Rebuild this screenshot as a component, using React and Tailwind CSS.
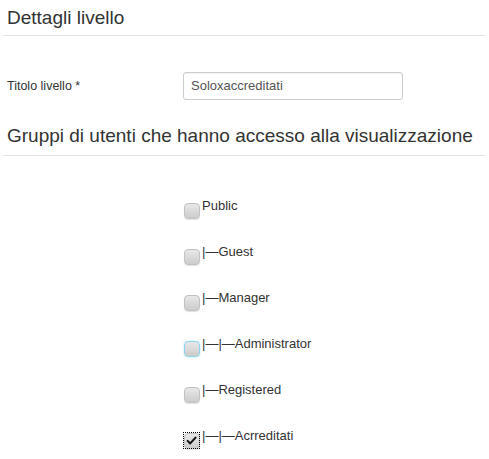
import React from "react";

const groups = [
  { label: "Public" },
  { label: "|—Guest" },
  { label: "|—Manager" },
  { label: "|—|—Administrator", focus: true },
  { label: "|—Registered" },
  { label: "|—|—Acrreditati", checked: true },
];

const Box = ({ checked, focus }) => (
  <span
    className={`mt-[5px] shrink-0 w-[17px] h-[17px] flex items-center justify-center ${
      checked ? "outline-1 outline-dotted outline-black -outline-offset-1" : ""
    }`}
  >
    <span
      className={`w-[16px] h-[16px] rounded-[4px] border bg-gradient-to-b from-[#e8e8e8] to-[#cccccc] flex items-center justify-center ${
        focus ? "border-[#8fd4ee] shadow-[0_0_2px_#a4def3]" : "border-[#c2c2c2] shadow-[0_1px_1px_rgba(0,0,0,0.12)]"
      }`}
    >
      {checked && (
        <svg viewBox="0 0 12 12" className="w-[11px] h-[11px]">
          <path d="M1.8 6.4 L4.6 9.2 L10.4 2.8" fill="none" stroke="#111" strokeWidth="2.2" strokeLinecap="round" strokeLinejoin="round" />
        </svg>
      )}
    </span>
  </span>
);

export default function App() {
  return (
    <div className="w-[489px] h-[459px] bg-white text-[#333] overflow-hidden" style={{ fontFamily: '"Liberation Sans", Arial, sans-serif' }}>
      <div className="mx-[3px] pt-[6px]">
        <h3 className="pl-[4px] text-[19px] leading-[24px] pb-[5px] border-b border-[#e5e5e5]">Dettagli livello</h3>
      </div>

      <div className="flex items-center mt-[36px] pl-[7px]">
        <label className="w-[176px] text-[12.5px]">Titolo livello *</label>
        <div className="w-[220px] h-[28px] border border-[#cccccc] rounded-[3px] flex items-center pl-[7px] text-[13px] text-[#555] shadow-[inset_0_1px_1px_rgba(0,0,0,0.05)]">
          Soloxaccreditati
        </div>
      </div>

      <div className="mx-[3px] mt-[24px]">
        <h3 className="pl-[4px] text-[19px] leading-[24px] pb-[7px] border-b border-[#e5e5e5]">
          Gruppi di utenti che hanno accesso alla visualizzazione
        </h3>
      </div>

      <div className="pt-[41px] pl-[183px] flex flex-col gap-[24px]">
        {groups.map((g) => (
          <div key={g.label} className="flex items-start gap-[2px] h-[22px]">
            <Box checked={g.checked} focus={g.focus} />
            <span className="text-[13px] leading-[18px]">{g.label}</span>
          </div>
        ))}
      </div>
    </div>
  );
}
